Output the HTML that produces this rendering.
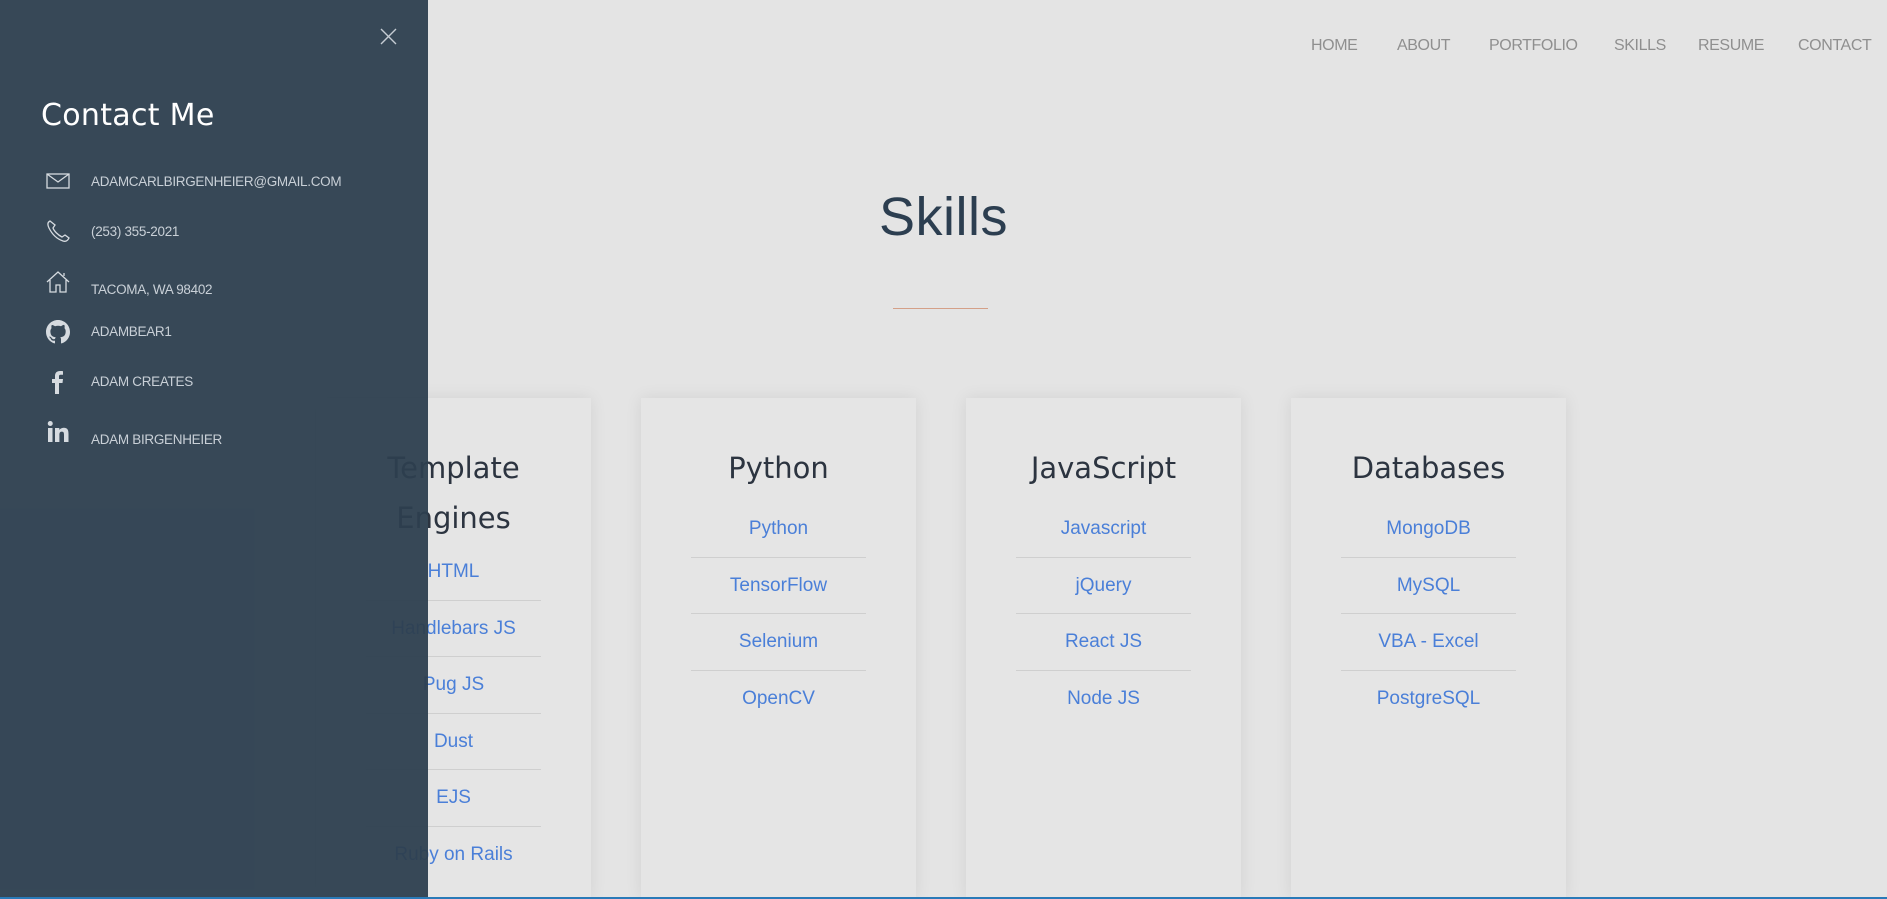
<!DOCTYPE html>
<html><head><meta charset="utf-8"><style>
*{margin:0;padding:0;box-sizing:border-box}
body{width:1887px;height:899px;overflow:hidden;background:#e4e4e4;position:relative;font-family:"Liberation Sans",sans-serif}
.nav{position:absolute;top:37px;font-size:16px;color:#8f8f8f;letter-spacing:-0.4px}
.title{position:absolute;left:0;width:1887px;text-align:center;top:186px;font-size:54px;color:#2c3e50;font-family:"Liberation Sans",sans-serif;letter-spacing:0.5px}
.div{position:absolute;left:893px;top:308px;width:95px;height:1px;background:#d4a088}
.card{position:absolute;top:398px;width:275px;height:500px;background:#e5e5e5;box-shadow:0 0 16px rgba(0,0,0,0.08)}
.ct{position:absolute;left:0;width:100%;text-align:center;font-size:29px;color:#2c3440;font-family:"DejaVu Sans","Liberation Sans",sans-serif;line-height:50px}
.it{position:absolute;left:50px;width:175px;height:56.5px;text-align:center;font-size:19px;color:#4a7fd8;line-height:56.5px}
.it.b{border-bottom:1px solid #cfcfcf}
.side{position:absolute;left:0;top:0;width:428px;height:897px;background:rgba(45,63,79,0.95)}
.side h2{position:absolute;left:41px;top:98px;font-size:30px;color:#fff;font-weight:400;font-family:"DejaVu Sans","Liberation Sans",sans-serif;letter-spacing:0.3px}
.row{position:absolute;left:91px;font-size:13.5px;color:#c9d0d7;letter-spacing:-0.3px}
.ic{position:absolute;left:46px}
.bl{position:absolute;left:0;top:897px;width:1887px;height:2px;background:#2a7ab8}
</style></head><body>
<div class="nav" style="left:1311px">HOME</div>
<div class="nav" style="left:1397px">ABOUT</div>
<div class="nav" style="left:1489px">PORTFOLIO</div>
<div class="nav" style="left:1614px">SKILLS</div>
<div class="nav" style="left:1698px">RESUME</div>
<div class="nav" style="left:1798px">CONTACT</div>
<div class="title">Skills</div>
<div class="div"></div>

<div class="card" style="left:316px">
<div class="ct" style="top:45px">Template<br>Engines</div>
<div class="it b" style="top:146px">HTML</div>
<div class="it b" style="top:202.5px">Handlebars JS</div>
<div class="it b" style="top:259px">Pug JS</div>
<div class="it b" style="top:315.5px">Dust</div>
<div class="it b" style="top:372px">EJS</div>
<div class="it" style="top:428.5px">Ruby on Rails</div>
</div>
<div class="card" style="left:641px">
<div class="ct" style="top:45px">Python</div>
<div class="it b" style="top:103px">Python</div>
<div class="it b" style="top:159.5px">TensorFlow</div>
<div class="it b" style="top:216px">Selenium</div>
<div class="it" style="top:272.5px">OpenCV</div>
</div>
<div class="card" style="left:966px">
<div class="ct" style="top:45px">JavaScript</div>
<div class="it b" style="top:103px">Javascript</div>
<div class="it b" style="top:159.5px">jQuery</div>
<div class="it b" style="top:216px">React JS</div>
<div class="it" style="top:272.5px">Node JS</div>
</div>
<div class="card" style="left:1291px">
<div class="ct" style="top:45px">Databases</div>
<div class="it b" style="top:103px">MongoDB</div>
<div class="it b" style="top:159.5px">MySQL</div>
<div class="it b" style="top:216px">VBA - Excel</div>
<div class="it" style="top:272.5px">PostgreSQL</div>
</div>

<div class="side">
<svg style="position:absolute;left:380px;top:28px" width="17" height="17" viewBox="0 0 17 17"><path d="M1 1L16 16M16 1L1 16" stroke="#c5ccd3" stroke-width="1.4"/></svg>
<h2>Contact Me</h2>
<svg class="ic" style="top:173px" width="24" height="16" viewBox="0 0 24 16"><rect x="1" y="1" width="22" height="14" fill="none" stroke="#d6dbe0" stroke-width="1.3"/><path d="M1 1L12 9L23 1" fill="none" stroke="#d6dbe0" stroke-width="1.3"/></svg>
<div class="row" style="top:174px">ADAMCARLBIRGENHEIER@GMAIL.COM</div>
<svg class="ic" style="top:219px" width="24" height="24" viewBox="0 0 24 24"><path d="M4 2C2 3 1 5 3 9C6 15 11 20 17 22C20 23 22 21 23 19L19 16L16 18C12 16 8 12 7 9L9 6Z" fill="none" stroke="#d6dbe0" stroke-width="1.3"/></svg>
<div class="row" style="top:224px">(253) 355-2021</div>
<svg class="ic" style="top:270px" width="24" height="24" viewBox="0 0 24 24"><path d="M1 12L12 2L23 12M4 10V22H10V15H14V22H20V10M18 3V6" fill="none" stroke="#d6dbe0" stroke-width="1.3"/></svg>
<div class="row" style="top:282px">TACOMA, WA 98402</div>
<svg class="ic" style="top:320px" width="24" height="24" viewBox="0 0 16 16"><path fill="#d6dbe0" d="M8 0C3.58 0 0 3.58 0 8c0 3.54 2.29 6.53 5.47 7.59.4.07.55-.17.55-.38 0-.19-.01-.82-.01-1.49-2.01.37-2.53-.49-2.690-.94-.09-.23-.48-.94-.82-1.13-.28-.15-.68-.52-.01-.53.63-.01 1.08.58 1.23.82.72 1.21 1.87.87 2.33.66.07-.52.28-.87.51-1.07-1.78-.2-3.64-.89-3.64-3.95 0-.87.31-1.59.82-2.15-.08-.2-.36-1.02.08-2.12 0 0 .67-.21 2.2.82.64-.18 1.32-.27 2-.27.68 0 1.36.09 2 .27 1.53-1.04 2.2-.82 2.2-.82.44 1.1.16 1.92.08 2.12.51.56.82 1.27.82 2.15 0 3.07-1.87 3.75-3.65 3.95.29.25.54.73.54 1.48 0 1.07-.01 1.93-.01 2.2 0 .21.15.46.55.38A8.013 8.013 0 0016 8c0-4.42-3.58-8-8-8z"/></svg>
<div class="row" style="top:324px">ADAMBEAR1</div>
<svg class="ic" style="top:370px" width="24" height="24" viewBox="0 0 24 24"><path d="M13 24V13H16.5L17 9H13V6.5C13 5.5 13.3 4.8 14.8 4.8H17V1.2C16.6 1.1 15.3 1 13.9 1C10.9 1 9 2.8 9 6.1V9H6V13H9V24Z" fill="#d6dbe0"/></svg>
<div class="row" style="top:374px">ADAM CREATES</div>
<svg class="ic" style="top:420px" width="24" height="24" viewBox="0 0 24 24"><rect x="2" y="8" width="4.5" height="14" fill="#d6dbe0"/><circle cx="4.25" cy="3.5" r="2.5" fill="#d6dbe0"/><path d="M9 8H13.3V10C14 8.8 15.5 7.7 17.7 7.7C21.8 7.7 22.5 10.4 22.5 14V22H18V15C18 13.3 17.9 11.6 15.8 11.6C13.7 11.6 13.4 13.1 13.4 15V22H9Z" fill="#d6dbe0"/></svg>
<div class="row" style="top:432px">ADAM BIRGENHEIER</div>
</div>
<div class="bl"></div>
</body></html>
